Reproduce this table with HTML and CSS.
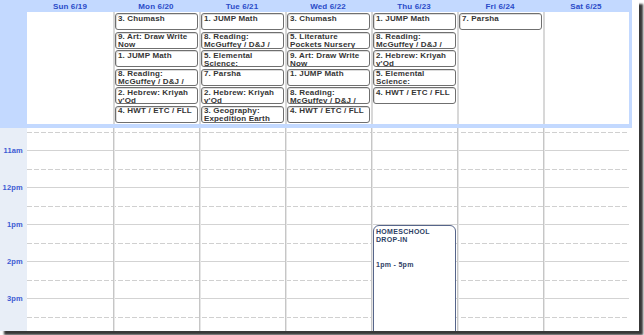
FILE: index.html
```html
<!DOCTYPE html>
<html>
<head>
<meta charset="utf-8">
<link rel="stylesheet" href="styles.css">
</head>
<body>
<div class="frame">
  <div class="top">
    <div class="head">
      <div></div>
      <div>Sun 6/19</div>
      <div>Mon 6/20</div>
      <div>Tue 6/21</div>
      <div>Wed 6/22</div>
      <div>Thu 6/23</div>
      <div>Fri 6/24</div>
      <div>Sat 6/25</div>
    </div>
    <div class="allday">
      <div class="agut"></div>
      <div class="acol"></div>
      <div class="acol">
        <div class="ev">3. Chumash</div>
        <div class="ev">9. Art: Draw Write Now</div>
        <div class="ev">1. JUMP Math</div>
        <div class="ev">8. Reading: McGuffey / D&amp;J /</div>
        <div class="ev">2. Hebrew: Kriyah v'Od</div>
        <div class="ev">4. HWT / ETC / FLL</div>
      </div>
      <div class="acol">
        <div class="ev">1. JUMP Math</div>
        <div class="ev">8. Reading: McGuffey / D&amp;J /</div>
        <div class="ev">5. Elemental Science:</div>
        <div class="ev">7. Parsha</div>
        <div class="ev">2. Hebrew: Kriyah v'Od</div>
        <div class="ev">3. Geography: Expedition Earth</div>
      </div>
      <div class="acol">
        <div class="ev">3. Chumash</div>
        <div class="ev">5. Literature Pockets Nursery</div>
        <div class="ev">9. Art: Draw Write Now</div>
        <div class="ev">1. JUMP Math</div>
        <div class="ev">8. Reading: McGuffey / D&amp;J /</div>
        <div class="ev">4. HWT / ETC / FLL</div>
      </div>
      <div class="acol">
        <div class="ev">1. JUMP Math</div>
        <div class="ev">8. Reading: McGuffey / D&amp;J /</div>
        <div class="ev">2. Hebrew: Kriyah v'Od</div>
        <div class="ev">5. Elemental Science:</div>
        <div class="ev">4. HWT / ETC / FLL</div>
      </div>
      <div class="acol">
        <div class="ev">7. Parsha</div>
      </div>
      <div class="acol"></div>
    </div>
  </div>
  <div class="times">
    <div class="gutter">
      <div></div>
      <div class="tl">11am</div>
      <div class="tl">12pm</div>
      <div class="tl">1pm</div>
      <div class="tl">2pm</div>
      <div class="tl">3pm</div>
    </div>
    <div class="tbody">
      <div class="lines">
        <div></div>
        <div class="dash"></div>
        <div class="solid"></div>
        <div class="dash"></div>
        <div class="solid"></div>
        <div class="dash"></div>
        <div class="solid"></div>
        <div class="dash"></div>
        <div class="solid"></div>
        <div class="dash"></div>
        <div class="solid"></div>
        <div class="dash"></div>
      </div>
      <div class="days">
        <div class="day"></div>
        <div class="day"></div>
        <div class="day"></div>
        <div class="day"></div>
        <div class="day">
          <div class="tev">
            <div>HOMESCHOOL DROP-IN</div>
            <div class="when">1pm - 5pm</div>
          </div>
        </div>
        <div class="day"></div>
        <div class="day"></div>
      </div>
    </div>
  </div>
</div>
</body>
</html>
```
FILE: styles.css
```css
:root {
  --rows: 4px 18px 19px 18px 19px 18px 19px 18px 19px 18px 19px 14px;
}
html, body {
  margin: 0;
  padding: 0;
  background: #fff;
}
body {
  font-family: "Liberation Sans", Arial, sans-serif;
  width: 644px;
  height: 335px;
  overflow: hidden;
}
.frame {
  width: 639px;
  height: 331px;
  background: #fff;
  box-shadow: 4px 4px 2px rgba(0, 0, 0, 0.78);
  overflow: hidden;
}
.top {
  width: 632px;
  background: #c3d9ff;
  padding-bottom: 4px;
}
.head {
  display: grid;
  grid-template-columns: 27px repeat(7, 86px);
  height: 12px;
  line-height: 13px;
  font-size: 8px;
  font-weight: bold;
  letter-spacing: 0.15px;
  color: #2a4bc8;
  text-align: center;
}
.allday {
  display: grid;
  grid-template-columns: 27px repeat(7, 86px);
  height: 112px;
}
.acol {
  background: #fff;
  display: flex;
  flex-direction: column;
  gap: 1.6px;
  padding-top: 1px;
  min-width: 0;
}
.acol + .acol {
  border-left: 2px solid #d8d8d8;
}
.ev {
  flex: none;
  height: 17px;
  box-sizing: border-box;
  margin-right: 1.5px;
  border: 1px solid #6f6f6f;
  border-radius: 3px;
  box-shadow: inset 1px 1px 0 #dcdcdc;
  padding: 0.5px 2px 0 2px;
  font-size: 8px;
  line-height: 8px;
  font-weight: bold;
  letter-spacing: 0.15px;
  color: #353535;
  overflow: hidden;
  background: #fff;
}
.times {
  display: flex;
  height: 203px;
  overflow: hidden;
}
.gutter {
  width: 27px;
  flex: none;
  background: #e8eef7;
  display: grid;
  grid-template-rows: var(--rows);
}
.tl {
  grid-row: span 2;
  display: flex;
  align-items: center;
  justify-content: flex-end;
  padding-right: 4px;
  font-size: 7.5px;
  font-weight: bold;
  letter-spacing: 0.2px;
  color: #3c5bd3;
}
.tbody {
  display: grid;
  width: 602px;
  flex: none;
}
.tbody > * {
  grid-area: 1 / 1;
}
.lines {
  display: grid;
  grid-template-rows: var(--rows);
}
.solid {
  border-top: 1px solid #d3d3d3;
}
.dash {
  background: repeating-linear-gradient(to right, #d0d0d0 0 5px, transparent 5px 7px) top left / 100% 1px no-repeat;
}
.days {
  display: flex;
}
.day {
  width: 86px;
  flex: none;
  position: relative;
  box-sizing: border-box;
}
.day + .day {
  border-left: 1px solid #c6c6c6;
  box-shadow: inset 1px 0 0 #e6e6e6;
}
.tev {
  position: absolute;
  left: 1px;
  top: 97px;
  width: 83px;
  bottom: -20px;
  box-sizing: border-box;
  background: #fff;
  border: 1px solid #56658a;
  border-radius: 6px 6px 0 0;
  padding: 2px 2px 0 2px;
  font-size: 7px;
  line-height: 8px;
  font-weight: bold;
  letter-spacing: 0.3px;
  color: #2f3f66;
}
.when {
  margin-top: 17px;
}
```
